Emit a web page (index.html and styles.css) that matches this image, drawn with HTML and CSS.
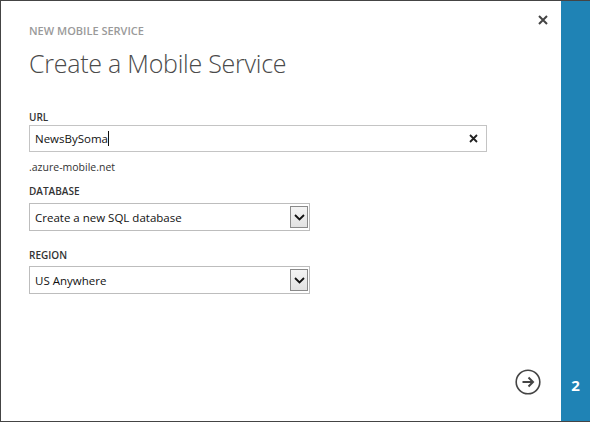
FILE: index.html
```html
<!DOCTYPE html>
<html lang="en">
<head>
<meta charset="UTF-8">
<title>New Mobile Service</title>
<link rel="stylesheet" href="styles.css">
</head>
<body>
<div class="frame">
    <div class="panel">
        <button class="close" type="button" aria-label="Close">
            <svg width="10" height="10" viewBox="0 0 10 10"><path d="M1 1L9 9M9 1L1 9" stroke="#444" stroke-width="2"/></svg>
        </button>
        <div class="kicker">NEW MOBILE SERVICE</div>
        <h1 class="title">Create a Mobile Service</h1>

        <label class="field-label url-label" for="url">URL</label>
        <div class="text-box" id="url">
            <span class="text-value">NewsBySoma</span><span class="caret"></span>
            <svg class="clear" width="9" height="9" viewBox="0 0 9 9"><path d="M1 1L8 8M8 1L1 8" stroke="#222" stroke-width="1.8"/></svg>
        </div>
        <div class="suffix">.azure-mobile.net</div>

        <label class="field-label db-label" for="database">DATABASE</label>
        <div class="select-box" id="database">
            <span class="select-value">Create a new SQL database</span>
            <span class="select-arrow">
                <svg width="11" height="7" viewBox="0 0 11 7"><path d="M1 1L5.5 5.5L10 1" fill="none" stroke="#111" stroke-width="1.8"/></svg>
            </span>
        </div>

        <label class="field-label region-label" for="region">REGION</label>
        <div class="select-box region-box" id="region">
            <span class="select-value">US Anywhere</span>
            <span class="select-arrow">
                <svg width="11" height="7" viewBox="0 0 11 7"><path d="M1 1L5.5 5.5L10 1" fill="none" stroke="#111" stroke-width="1.8"/></svg>
            </span>
        </div>

        <div class="footer">
            <button class="next" type="button" aria-label="Next">
                <svg width="26" height="26" viewBox="0 0 26 26">
                    <circle cx="13" cy="13" r="11.8" fill="none" stroke="#444" stroke-width="1.6"/>
                    <path d="M7.5 13H18M13.5 8.5L18 13L13.5 17.5" fill="none" stroke="#444" stroke-width="2"/>
                </svg>
            </button>
        </div>
    </div>
    <div class="rail">
        <span class="step">2</span>
    </div>
</div>
</body>
</html>
```
FILE: styles.css
```css
/* Basic Reset */
body {
    margin: 0;
    padding: 0;
    font-family: "Open Sans", "Noto Sans", sans-serif;
    color: #333;
    background: #fff;
}

/* Dialog frame */
.frame {
    display: flex;
    height: 422px;
    box-sizing: border-box;
    border: 1px solid #444;
    border-right: none;
}

.panel {
    flex: 1;
    display: flex;
    flex-direction: column;
    position: relative;
    padding: 23px 0 0 28px;
    background: #fff;
}

.close {
    position: absolute;
    top: 12px;
    right: 13px;
    border: none;
    background: none;
    padding: 0;
    width: 10px;
    height: 10px;
    cursor: pointer;
}

.kicker {
    font-size: 11px;
    font-weight: 600;
    color: #9a9a9a;
    line-height: 14px;
}

.title {
    margin: 8px 0 0;
    font-size: 25px;
    font-weight: 300;
    color: #4a4a4a;
    line-height: 34px;
    letter-spacing: -0.25px;
}

/* Form fields */
.field-label {
    display: block;
    font-size: 10px;
    font-weight: 600;
    color: #333;
    line-height: 14px;
}

.url-label {
    margin-top: 30px;
}

.db-label {
    margin-top: 9px;
}

.region-label {
    margin-top: 17px;
}

.text-box {
    display: flex;
    align-items: center;
    width: 458px;
    height: 27px;
    margin-top: 1px;
    box-sizing: border-box;
    border: 1px solid #c4c4c4;
    padding: 0 8px 0 5px;
}

.text-value,
.select-value {
    font-size: 11.5px;
    color: #111;
}

.caret {
    width: 1px;
    height: 15px;
    background: #111;
}

.clear {
    margin-left: auto;
}

.suffix {
    margin-top: 7px;
    font-size: 10.5px;
    color: #333;
    line-height: 16px;
}

.select-box {
    display: flex;
    align-items: center;
    width: 281px;
    height: 28px;
    margin-top: 5px;
    box-sizing: border-box;
    border: 1px solid #bdbdbd;
    padding: 0 1px 0 5px;
}

.region-box {
    margin-top: 4px;
}

.select-value {
    flex: 1;
}

.select-arrow {
    display: flex;
    align-items: center;
    justify-content: center;
    width: 18px;
    height: 22px;
    box-sizing: border-box;
    border: 1px solid #8a8a8a;
    background: linear-gradient(#f4f4f4, #e2e2e2);
}

.footer {
    margin-top: auto;
    display: flex;
    justify-content: flex-end;
    padding: 0 20px 26px 0;
}

.next {
    border: none;
    background: none;
    padding: 0;
    width: 26px;
    height: 26px;
    cursor: pointer;
}

/* Step rail */
.rail {
    width: 29px;
    background: #1f83b5;
    display: flex;
    align-items: flex-end;
    justify-content: center;
}

.step {
    color: #fff;
    font-size: 15px;
    font-weight: 700;
    line-height: 20px;
    margin-bottom: 26px;
}
```
